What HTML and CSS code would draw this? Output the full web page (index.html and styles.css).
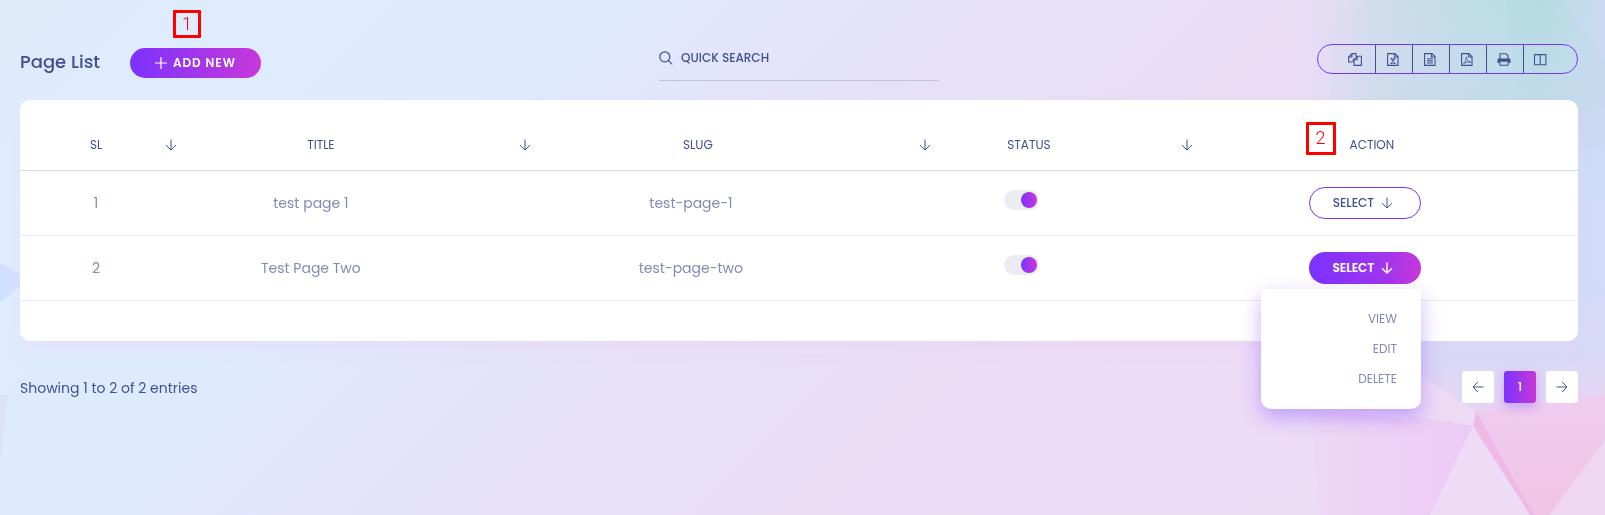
FILE: index.html
```html
<!DOCTYPE html>
<html lang="en">
<head>
<meta charset="utf-8">
<title>Page List</title>
<link rel="stylesheet" href="styles.css">
</head>
<body>
<svg class="backdrop" viewBox="0 0 1605 515" preserveAspectRatio="none" aria-hidden="true">
  <defs>
    <linearGradient id="teal" x1="0" x2="1" y1="0" y2="0">
      <stop offset="0" stop-color="#e4dcf4" stop-opacity="0"/>
      <stop offset=".25" stop-color="#d3dcec"/>
      <stop offset=".5" stop-color="#c2dde7"/>
      <stop offset=".8" stop-color="#b7dde2"/>
      <stop offset="1" stop-color="#cbd9f2"/>
    </linearGradient>
    <linearGradient id="sky" x1="0" x2="0" y1="0" y2="1">
      <stop offset="0" stop-color="#cfdaf8" stop-opacity="0"/>
      <stop offset=".3" stop-color="#cbdaf2" stop-opacity=".55"/>
      <stop offset=".6" stop-color="#cddcf8"/>
      <stop offset="1" stop-color="#d4daf7"/>
    </linearGradient>
    <linearGradient id="blush" x1="0" x2="0" y1="0" y2="1">
      <stop offset="0" stop-color="#d5daf7"/>
      <stop offset=".3" stop-color="#e2d5f4"/>
      <stop offset=".55" stop-color="#efcef0"/>
      <stop offset="1" stop-color="#f0cdec"/>
    </linearGradient>
    <linearGradient id="rose" x1="0" x2="0" y1="0" y2="1">
      <stop offset="0" stop-color="#eecdf1"/>
      <stop offset="1" stop-color="#f1c3e6"/>
    </linearGradient>
    <linearGradient id="lilac" x1="0" x2="1" y1="0" y2="0">
      <stop offset="0" stop-color="#ecd8f5"/>
      <stop offset=".6" stop-color="#efcff6"/>
      <stop offset="1" stop-color="#ebcbf4"/>
    </linearGradient>
  </defs>
  <rect x="1290" width="315" height="200" fill="url(#teal)"/>
  <polygon points="1505,0 1560,0 1605,60 1605,110 1520,110" fill="#b2dbe0" opacity=".25"/>
  <rect x="1330" width="275" height="345" fill="url(#sky)" opacity=".4"/>
  <rect x="1400" width="205" height="345" fill="url(#sky)" opacity=".6"/>
  <rect x="1578" y="150" width="27" height="195" fill="#cddcf8" opacity=".6"/>
  <polygon points="1400,341 1605,341 1605,515 1421,515" fill="url(#blush)"/>
  <polygon points="1578,308 1605,297 1605,350 1578,342" fill="#d8d9f7"/>
  <polygon points="1310,410 1473,425 1430,515 1320,515" fill="url(#lilac)"/>
  <polygon points="1400,362 1476,411 1473,426 1380,410" fill="#eddbf6"/>
  <polygon points="1473,426 1430,515 1532,515" fill="#eedcf6"/>
  <polygon points="1476,411 1605,395 1605,515 1532,515" fill="url(#rose)"/>
  <polygon points="1476,411 1473,426 1530,515 1534,515" fill="#efb9e7"/>
  <polygon points="1605,440 1549,515 1605,515" fill="#efd6f2"/>
  <polygon points="0,263 20,274 20,286 0,303" fill="#d2e0ff"/>
  <polygon points="0,395 8,395 0,470" fill="#dde2fb"/>
</svg>

<svg class="sprite" aria-hidden="true">
  <symbol id="arrow-down" viewBox="0 0 12 12"><path d="M6 .5v10.500M1 6.200L6 11l5-4.800" /></symbol>
  <symbol id="arrow-left" viewBox="0 0 12 12"><path d="M11.500 6H1M5.800 1L1 6l4.800 5"/></symbol>
  <symbol id="arrow-right" viewBox="0 0 12 12"><path d="M.5 6H11M6.200 1L11 6l-4.800 5"/></symbol>
</svg>

<main class="page">
  <header class="toolbar">
    <div class="heading">
      <h1 class="title">Page List</h1>
      <div class="anchor">
        <button class="add" type="button"><svg class="plus" viewBox="0 0 12 12"><path d="M6 0v12M0 6h12"/></svg>ADD NEW</button>
        <span class="marker marker-add">1</span>
      </div>
    </div>
    <label class="search">
      <svg class="lens" viewBox="0 0 14 14"><circle cx="5.800" cy="5.800" r="5"/><path d="M9.300 9.300L13.300 13.300"/></svg>
      <input class="search-input" type="text" placeholder="QUICK SEARCH" aria-label="Quick search">
    </label>
    <div class="exports">
      <button class="export" type="button" aria-label="Copy"><svg viewBox="0 0 14 13"><path d="M4.500 9H.6V4L4 .6h3.900v2.600M4 .6V4H.6M6 7.200V12.400h7.400V3.200H9.200L6 6.500M9.200 3.200v3.500H5.200V9"/></svg></button>
      <button class="export" type="button" aria-label="Excel"><svg viewBox="0 0 14 13"><path d="M1.600.6h7.200l3.200 3v8.800H1.600zM8.500.6V4H12M4.500 5.500h2M7.500 5.500h2M4.500 10.500h2M7.500 10.500h2M5.200 5.500l3.500 5M8.700 5.500l-3.500 5"/></svg></button>
      <button class="export" type="button" aria-label="CSV"><svg viewBox="0 0 14 13"><path d="M1.600.6h7.200l3.200 3v8.800H1.600zM8.500.6V4H12M4 5.800h5.800M4 7.900h5.800M4 10h5.800"/></svg></button>
      <button class="export" type="button" aria-label="PDF"><svg viewBox="0 0 14 13"><path d="M1.600.6h7.200l3.200 3v8.800H1.600zM8.500.6V4H12"/><path class="fine" d="M3.300 10.800C5 10 6.500 6.500 6.300 3.800c.2 3 1.700 4.900 4.400 5.300-2.500-.5-5 .1-7.400 1.700z"/></svg></button>
      <button class="export" type="button" aria-label="Print"><svg viewBox="0 0 14 13"><path d="M3 6V.8h6.200L11 2.600V6M3 9.500v2.700h8V9.500"/><path class="solid" d="M1.500 5.500h11q1 0 1 1V10H11V8.800H3V10H.5V6.500q0-1 1-1z"/></svg></button>
      <button class="export" type="button" aria-label="Columns"><svg viewBox="0 0 14 13"><path d="M1.500 1.500h11.400v10.300H1.500zM1 1.800h12.300M7.200 1.500v10.300"/></svg></button>
    </div>
  </header>

  <section class="card">
    <table class="table">
      <thead>
        <tr>
          <th class="col-sl"><div class="head"><span class="label">SL</span><button class="sort" type="button" aria-label="Sort by SL"><svg class="arrow"><use href="#arrow-down"/></svg></button></div></th>
          <th class="col-title"><div class="head"><span class="label">TITLE</span><button class="sort" type="button" aria-label="Sort by title"><svg class="arrow"><use href="#arrow-down"/></svg></button></div></th>
          <th class="col-slug"><div class="head"><span class="label">SLUG</span><button class="sort" type="button" aria-label="Sort by slug"><svg class="arrow"><use href="#arrow-down"/></svg></button></div></th>
          <th class="col-status"><div class="head"><span class="label">STATUS</span><button class="sort" type="button" aria-label="Sort by status"><svg class="arrow"><use href="#arrow-down"/></svg></button></div></th>
          <th class="col-action"><span class="anchor">ACTION<span class="marker marker-action">2</span></span></th>
        </tr>
      </thead>
      <tbody>
        <tr>
          <td>1</td>
          <td class="name">test page 1</td>
          <td>test-page-1</td>
          <td><input class="switch" type="checkbox" checked aria-label="Status of test page 1"></td>
          <td><button class="select" type="button">SELECT<svg class="arrow"><use href="#arrow-down"/></svg></button></td>
        </tr>
        <tr>
          <td>2</td>
          <td class="name">Test Page Two</td>
          <td>test-page-two</td>
          <td><input class="switch" type="checkbox" checked aria-label="Status of Test Page Two"></td>
          <td>
            <div class="anchor">
              <button class="select open" type="button" aria-expanded="true">SELECT<svg class="arrow"><use href="#arrow-down"/></svg></button>
              <div class="menu">
                <a href="#view">VIEW</a>
                <a href="#edit">EDIT</a>
                <a href="#delete">DELETE</a>
              </div>
            </div>
          </td>
        </tr>
      </tbody>
    </table>
  </section>

  <footer class="footer">
    <p class="info">Showing 1 to 2 of 2 entries</p>
    <nav class="pager" aria-label="Pagination">
      <button class="page-btn" type="button" aria-label="Previous"><svg class="arrow"><use href="#arrow-left"/></svg></button>
      <button class="page-btn current" type="button">1</button>
      <button class="page-btn" type="button" aria-label="Next"><svg class="arrow"><use href="#arrow-right"/></svg></button>
    </nav>
  </footer>
</main>
</body>
</html>
```

FILE: styles.css
```css
* { box-sizing: border-box; }

body {
  margin: 0;
  min-height: 100vh;
  font-family: Poppins, Inter, "Open Sans", sans-serif;
  font-size: 14px;
  color: #415094;
  background: linear-gradient(135deg, #dfeafa 0%, #dfecff 10%, #deebff 27%, #e3e5fd 37%, #e7e1fa 47%, #e9def7 59%, #ecdcf7 71%, #eedcf6 100%);
}

button, input { font-family: inherit; color: inherit; }
button { cursor: pointer; padding: 0; border: 0; background: none; }

svg { fill: none; stroke: currentColor; }

.backdrop {
  position: fixed;
  inset: 0;
  width: 100%;
  height: 100%;
  z-index: -1;
  stroke: none;
}

.sprite { display: none; }

.page { padding: 44px 27px 24px 20px; }

.toolbar {
  display: grid;
  grid-template-columns: 1fr 280px 1fr;
  align-items: start;
  height: 56px;
}

.heading { display: flex; gap: 30px; align-items: center; height: 38px; }
.title { margin: 0; padding-bottom: 2px; font-size: 18px; font-weight: 500; line-height: 30px; white-space: nowrap; }
.anchor { position: relative; display: inline-block; }

.add {
  display: flex;
  align-items: center;
  justify-content: center;
  gap: 6px;
  width: 131px;
  height: 30px;
  border-radius: 15px;
  color: #fff;
  font-size: 12px;
  font-weight: 600;
  letter-spacing: 1px;
  background: linear-gradient(90deg, #7c32ff, #c738d8);
}
.plus { width: 12px; height: 12px; stroke-width: 1.2; }

.marker {
  position: absolute;
  display: flex;
  align-items: center;
  justify-content: center;
  padding-bottom: 2px;
  border: 3px solid #fe0000;
  border-radius: 1px;
  color: #fe0000;
  font-family: Roboto, sans-serif;
  font-weight: 300;
  font-size: 18px;
}
.marker-add { left: 43px; top: -38px; width: 28px; height: 28px; }
.marker-action { right: calc(100% + 14px); top: -14px; width: 30px; height: 33px; }

.search {
  display: flex;
  align-items: center;
  gap: 8px;
  height: 37px;
  padding-bottom: 9px;
  border-bottom: 1px solid #bbc1e1;
}
.lens { width: 14px; height: 14px; stroke-width: 1.2; flex: none; }
.search-input {
  flex: 1;
  min-width: 0;
  padding: 0;
  border: 0;
  outline: 0;
  background: none;
  font-size: 12px;
  font-weight: 500;
}
.search-input::placeholder { color: #415094; opacity: 1; }

.exports {
  justify-self: end;
  display: flex;
  height: 30px;
  padding: 0 19px;
  border: 1px solid #7c32ff;
  border-radius: 15px;
}
.export {
  width: 37px;
  display: flex;
  align-items: center;
  justify-content: center;
  padding-right: 3px;
  border-right: 1px solid #415094;
}
.export:first-child { width: 39px; }
.export:last-child { width: 34px; border-right: 0; }
.export svg { width: 14px; height: 13px; stroke-width: 1.1; }
.export .fine { stroke-width: .8; }
.export .solid { fill: currentColor; stroke: none; }

.card {
  padding: 20px 0 40px;
  border-radius: 10px;
  background: #fff;
  box-shadow: 0 10px 15px rgba(236, 208, 244, .3);
}

.table { width: 100%; table-layout: fixed; border-collapse: separate; border-spacing: 0; }

th {
  height: 51px;
  padding: 0;
  border-bottom: 1px solid #d5d6e9;
  font-size: 12px;
  font-weight: 400;
}
.col-sl { width: 10.4%; padding-left: 66px; }
.col-title { width: 22.7%; }
.col-slug { width: 25.7%; }
.col-status { width: 16.8%; }
.col-action { padding-right: 32px; }

.head { display: flex; align-items: center; }
.label { flex: 1; text-align: center; }
.sort { display: flex; justify-content: flex-end; width: 76px; padding-right: 5px; }
.arrow { width: 12px; height: 12px; flex: none; }

td {
  height: 65px;
  padding: 0 90px 0 0;
  border-bottom: 1px solid #e9e9f2;
  color: #828bb2;
  font-size: 14px;
  text-align: center;
}
td:first-child { padding-right: 10px; }
td:last-child { padding-right: 46px; }
.name { padding-right: 96px; }

.switch {
  appearance: none;
  display: block;
  width: 35px;
  height: 20px;
  margin: 0 auto 6px;
  border-radius: 10px;
  background: #ecedf3;
}
.switch::before {
  content: "";
  display: block;
  width: 16px;
  height: 16px;
  margin: 2px;
  border-radius: 50%;
  background: linear-gradient(90deg, #7c32ff, #c738d8);
}
.switch:checked::before { margin-left: 17px; }

.select {
  display: inline-flex;
  align-items: center;
  justify-content: center;
  gap: 7px;
  width: 112px;
  height: 32px;
  padding-right: 4px;
  border: 1px solid #7c32ff;
  border-radius: 16px;
  color: #415094;
  font-size: 12px;
  font-weight: 500;
  vertical-align: middle;
}
.open {
  border: 0;
  color: #fff;
  font-weight: 600;
  background: linear-gradient(90deg, #7c32ff, #a235ec 70%, #c738d8);
}
.open .arrow { stroke-width: 1.4; }

.menu {
  position: absolute;
  top: calc(100% + 5px);
  right: 0;
  width: 160px;
  padding: 15px 24px;
  display: flex;
  flex-direction: column;
  align-items: flex-end;
  border-radius: 4px 4px 10px 10px;
  background: #fff;
  box-shadow: 0 8px 20px rgba(108, 39, 255, .35);
  z-index: 1;
}
.menu a { color: #828bb2; font-size: 12px; line-height: 30px; text-decoration: none; }

.footer {
  display: flex;
  align-items: center;
  justify-content: space-between;
  padding-top: 30px;
}
.info { margin: 0; padding-top: 2px; }
.pager { display: flex; gap: 10px; }
.page-btn {
  display: flex;
  align-items: center;
  justify-content: center;
  width: 32px;
  height: 32px;
  border-radius: 3px;
  background: #fff;
}
.current {
  color: #fff;
  font-size: 13px;
  font-weight: 500;
  background: linear-gradient(90deg, #7c32ff, #c738d8);
  box-shadow: 0 5px 10px rgba(108, 39, 255, .25);
}
```
